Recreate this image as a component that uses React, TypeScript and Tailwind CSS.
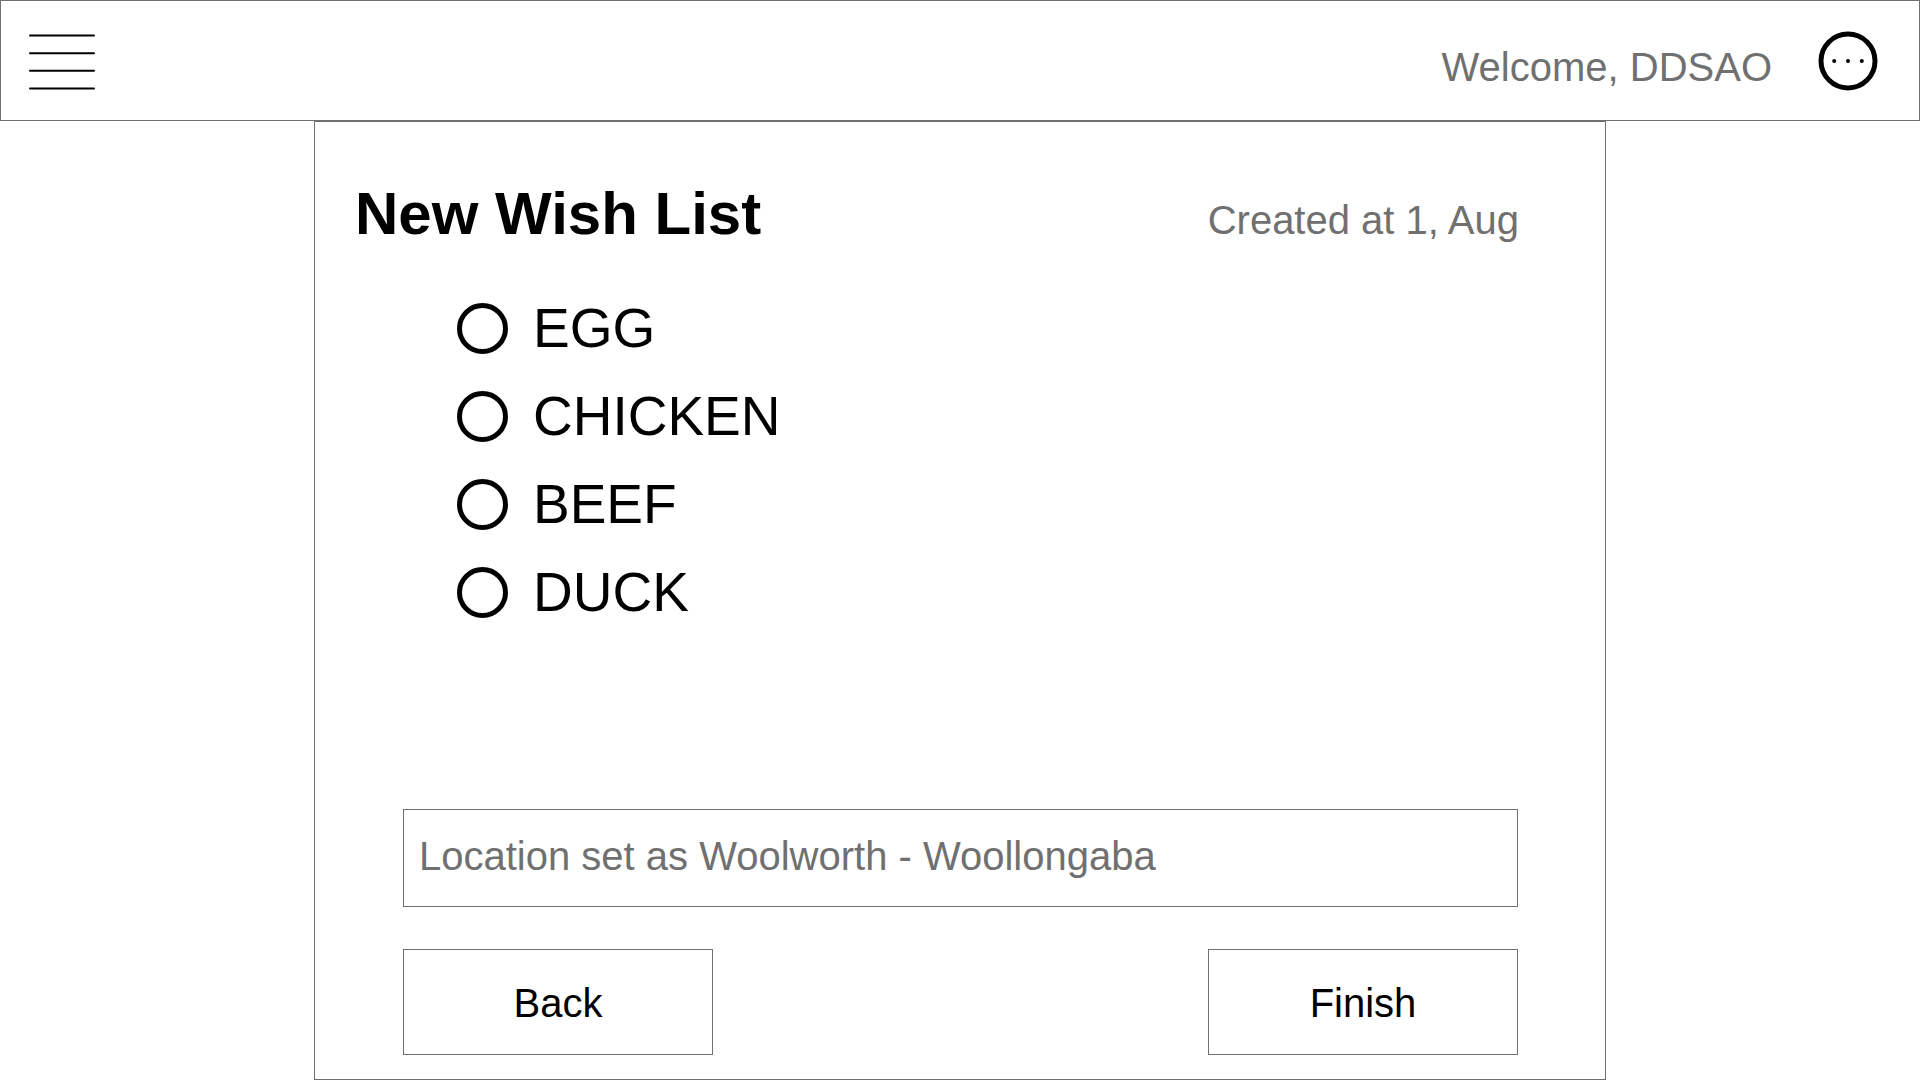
const items = ["EGG", "CHICKEN", "BEEF", "DUCK"];

function MenuIcon() {
  return (
    <svg width="68" height="60" viewBox="0 0 68 60" stroke="#000" strokeWidth="2" strokeLinecap="round" aria-hidden="true">
      <path d="M3 4.5H67M3 22.2H67M3 39.8H67M3 57.5H67" />
    </svg>
  );
}

function MoreIcon() {
  return (
    <svg width="60" height="60" viewBox="0 0 60 60" aria-hidden="true">
      <circle cx="30" cy="30" r="27" fill="none" stroke="#000" strokeWidth="5" />
      <circle cx="16.2" cy="30" r="2" />
      <circle cx="30" cy="30" r="2" />
      <circle cx="43.8" cy="30" r="2" />
    </svg>
  );
}

export default function App() {
  return (
    <div className="flex min-h-screen flex-col bg-white font-['Liberation_Sans',Arial,sans-serif] text-black">
      <header className="flex h-[121px] items-center justify-between border border-[#707070] pr-[41px] pl-[26px]">
        <button type="button" aria-label="Menu">
          <MenuIcon />
        </button>
        <div className="flex items-center gap-[46px]">
          <p className="pt-3 text-[40px] leading-12 text-[#707070]">Welcome, DDSAO</p>
          <button type="button" aria-label="More options">
            <MoreIcon />
          </button>
        </div>
      </header>

      <main className="mx-auto flex w-full max-w-[1292px] flex-1 flex-col border border-[#707070] pb-6">
        <div className="flex items-baseline justify-between pt-14 pr-[86px] pl-10">
          <h1 className="text-[60px] leading-[72px] font-bold">New Wish List</h1>
          <p className="text-[40px] leading-12 text-[#707070]">Created at 1, Aug</p>
        </div>

        <ul className="flex flex-col gap-[22px] pt-[45px] pl-[142px]">
          {items.map((item) => (
            <li key={item}>
              <label className="flex h-[66px] items-center gap-[25px] text-[55px] leading-[66px]">
                <input
                  type="radio"
                  name="item"
                  value={item}
                  className="size-[51px] shrink-0 appearance-none rounded-full border-5 border-black checked:bg-black"
                />
                {item}
              </label>
            </li>
          ))}
        </ul>

        <div className="mt-auto flex flex-col gap-[42px] pr-[87px] pl-[88px]">
          <input
            type="text"
            aria-label="Location"
            defaultValue="Location set as Woolworth - Woollongaba"
            className="h-[98px] w-full border border-[#707070] px-[15px] pb-1 text-[40px] leading-12 text-[#707070]"
          />
          <div className="flex justify-between">
            <button type="button" className="h-[106px] w-[310px] border border-[#707070] pt-0.5 text-[40px] leading-12">
              Back
            </button>
            <button type="button" className="h-[106px] w-[310px] border border-[#707070] pt-0.5 text-[40px] leading-12">
              Finish
            </button>
          </div>
        </div>
      </main>
    </div>
  );
}
